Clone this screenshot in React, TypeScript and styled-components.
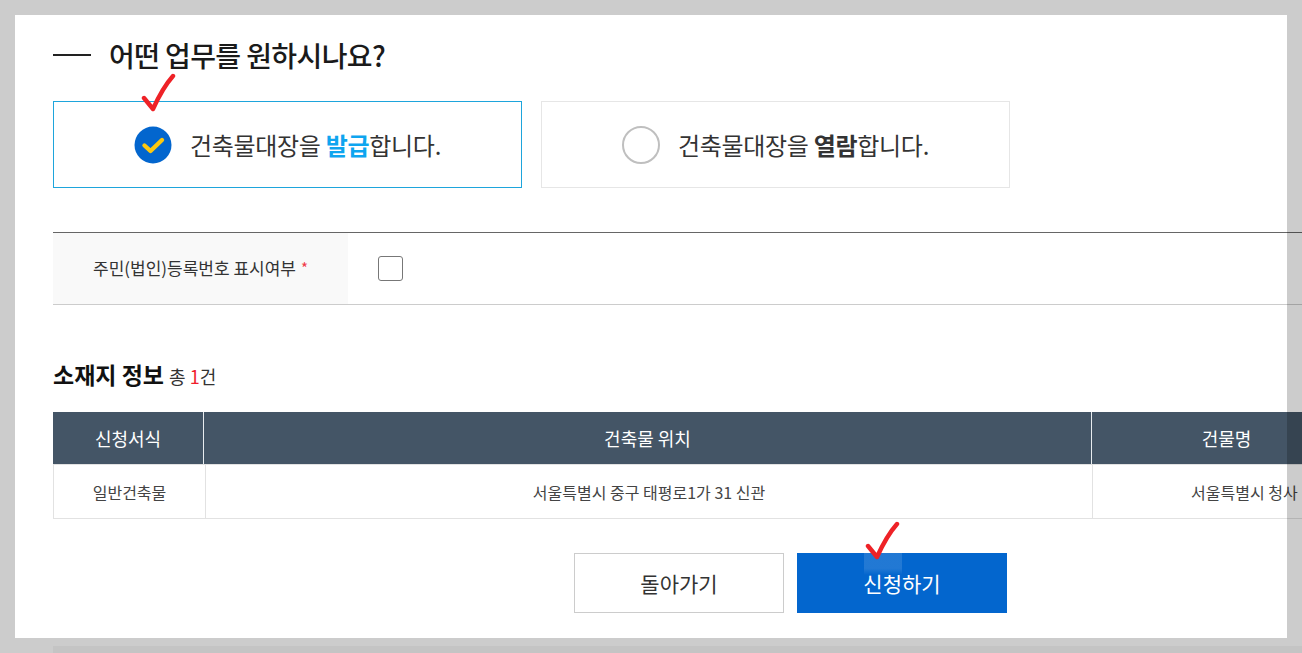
import styled, {createGlobalStyle} from 'styled-components';

const GlobalStyle = createGlobalStyle`
  html, body {
    margin: 0;
    padding: 0;
    background: #fff;
    overflow: hidden;
  }

  * {
    box-sizing: border-box;
  }

  body {
    font-family: "Noto Sans CJK KR", "Noto Sans", sans-serif;
    color: #333;
  }
`;

const RedCheck = () => (
  <CheckSvg viewBox="0 0 36 42" width="36" height="42">
    <path
      d="M4 25 L13 36 C18 25 25 12 33 3"
      fill="none"
      stroke="#ee2227"
      strokeWidth="4.4"
      strokeLinecap="round"
      strokeLinejoin="round"
    />
  </CheckSvg>
);

export default function App() {
  return (
    <>
      <GlobalStyle />
      <Page>
        <Heading>
          <HeadingDash />
          어떤 업무를 원하시나요?
        </Heading>

        <Cards>
          <Card $selected>
            <CheckMark $left={86} $top={-29}>
              <RedCheck />
            </CheckMark>
            <svg width="38" height="38" viewBox="0 0 38 38">
              <circle cx="19" cy="19" r="18.5" fill="#0366ce" />
              <path
                d="M10.5 19.5 L16.5 25 L28 14"
                fill="none"
                stroke="#fdc80f"
                strokeWidth="4.4"
                strokeLinecap="round"
                strokeLinejoin="round"
              />
            </svg>
            <CardText>
              건축물대장을 <Blue>발급</Blue>합니다.
            </CardText>
          </Card>
          <Card>
            <EmptyRadio />
            <CardText>
              건축물대장을 <strong>열람</strong>합니다.
            </CardText>
          </Card>
        </Cards>

        <FormRow>
          <FormLabel>
            주민(법인)등록번호 표시여부 <Star>*</Star>
          </FormLabel>
          <FormValue>
            <CheckBox />
          </FormValue>
        </FormRow>

        <SectionTitle>
          소재지 정보 <Count>총 <Red>1</Red>건</Count>
        </SectionTitle>

        <Table>
          <HeadRow>
            <HeadCell>신청서식</HeadCell>
            <HeadCell>건축물 위치</HeadCell>
            <HeadCell>건물명</HeadCell>
          </HeadRow>
          <BodyRow>
            <BodyCell>일반건축물</BodyCell>
            <BodyCell>서울특별시 중구 태평로1가 31 신관</BodyCell>
            <BodyCell $left>서울특별시 청사</BodyCell>
          </BodyRow>
        </Table>

        <Actions>
          <BackButton>돌아가기</BackButton>
          <SubmitButton>
            <CheckGlow />
            <CheckMark $left={67} $top={-32}>
              <RedCheck />
            </CheckMark>
            신청하기
          </SubmitButton>
        </Actions>

        <FooterStrip />
      </Page>
      <Spotlight />
    </>
  );
}

const Page = styled.div`
  position: relative;
  width: 1302px;
  height: 653px;
  padding: 29px 0 0 53px;
  overflow: hidden;
`;

const Heading = styled.h2`
  display: flex;
  align-items: center;
  height: 52px;
  margin: 0;
  font-size: 28px;
  font-weight: 500;
  letter-spacing: -0.6px;
  color: #1a1a1a;
`;

const HeadingDash = styled.span`
  width: 38px;
  height: 2px;
  margin-right: 18px;
  background: #222;
`;

const Cards = styled.div`
  display: flex;
  gap: 19px;
  margin-top: 20px;
`;

const Card = styled.div<{$selected?: boolean}>`
  position: relative;
  display: flex;
  align-items: center;
  justify-content: center;
  gap: 18px;
  width: 469px;
  height: 87px;
  border: 1px solid ${(props) => (props.$selected ? '#1ea5dc' : '#e6e6e6')};
`;

const CardText = styled.span`
  font-size: 24px;
  letter-spacing: -0.3px;
  color: #333;

  strong {
    font-weight: 700;
  }
`;

const Blue = styled.b`
  font-weight: 700;
  color: #0ea5ef;
`;

const EmptyRadio = styled.span`
  width: 38px;
  height: 38px;
  border: 2px solid #bfbfbf;
  border-radius: 50%;
  background: #fff;
`;

const CheckMark = styled.span<{$left: number; $top: number}>`
  position: absolute;
  left: ${(props) => props.$left}px;
  top: ${(props) => props.$top}px;
  line-height: 0;
`;

const CheckSvg = styled.svg`
  display: block;
`;

const FormRow = styled.div`
  display: flex;
  width: 1249px;
  height: 73px;
  margin-top: 44px;
  border-top: 1px solid #666;
  border-bottom: 1px solid #ccc;
`;

const FormLabel = styled.div`
  display: flex;
  align-items: center;
  justify-content: center;
  gap: 5px;
  width: 295px;
  padding-bottom: 2px;
  background: #f9f9f9;
  font-size: 17px;
  color: #333;
`;

const Star = styled.span`
  color: #f0394a;
  font-size: 15px;
`;

const FormValue = styled.div`
  display: flex;
  align-items: center;
  padding-left: 30px;
`;

const CheckBox = styled.span`
  width: 25px;
  height: 25px;
  border: 1px solid #777;
  border-radius: 3px;
  background: #fff;
`;

const SectionTitle = styled.h3`
  display: flex;
  align-items: baseline;
  gap: 5px;
  height: 36px;
  margin: 52px 0 0;
  font-size: 23px;
  font-weight: 700;
  color: #111;
`;

const Count = styled.span`
  font-size: 18px;
  font-weight: 400;
  color: #333;
`;

const Red = styled.span`
  color: #f01c2c;
`;

const Table = styled.div`
  width: 1360px;
  margin-top: 19px;
`;

const HeadRow = styled.div`
  display: grid;
  grid-template-columns: 151px 888px 270px;
  height: 53px;
  border-bottom: 1px solid #e2e2e2;
  background: #445566;
`;

const HeadCell = styled.div`
  display: flex;
  align-items: center;
  justify-content: center;
  border-right: 1px solid #e8ecef;
  font-size: 18px;
  color: #fff;
`;

const BodyRow = styled.div`
  display: grid;
  grid-template-columns: 152px 887px 270px;
  height: 54px;
  border-left: 1px solid #e2e2e2;
  border-bottom: 1px solid #e2e2e2;
`;

const BodyCell = styled.div<{$left?: boolean}>`
  display: flex;
  align-items: center;
  justify-content: ${(props) => (props.$left ? 'flex-start' : 'center')};
  padding-left: ${(props) => (props.$left ? '98px' : '0')};
  border-right: 1px solid #e2e2e2;
  font-size: 16px;
  white-space: nowrap;
  color: #444;
`;

const Actions = styled.div`
  display: flex;
  gap: 13px;
  margin: 34px 0 0 521px;
`;

const BackButton = styled.button`
  width: 210px;
  height: 60px;
  border: 1px solid #ccc;
  background: #fff;
  font-family: inherit;
  font-size: 21px;
  color: #333;
`;

const SubmitButton = styled.button`
  position: relative;
  width: 210px;
  height: 60px;
  border: 0;
  background: #0366ce;
  font-family: inherit;
  font-size: 21px;
  color: #fff;
`;

const CheckGlow = styled.span`
  position: absolute;
  left: 67px;
  top: 0;
  width: 38px;
  height: 22px;
  background: linear-gradient(rgba(255, 255, 255, 0.12) 70%, rgba(255, 255, 255, 0));
`;

const FooterStrip = styled.div`
  position: absolute;
  left: 53px;
  right: 0;
  top: 646px;
  height: 7px;
  background: #f5f5f5;
`;

const Spotlight = styled.div`
  position: fixed;
  left: 15px;
  top: 15px;
  width: 1272px;
  height: 623px;
  box-shadow: 0 0 0 1400px rgba(0, 0, 0, 0.2);
  pointer-events: none;
`;
